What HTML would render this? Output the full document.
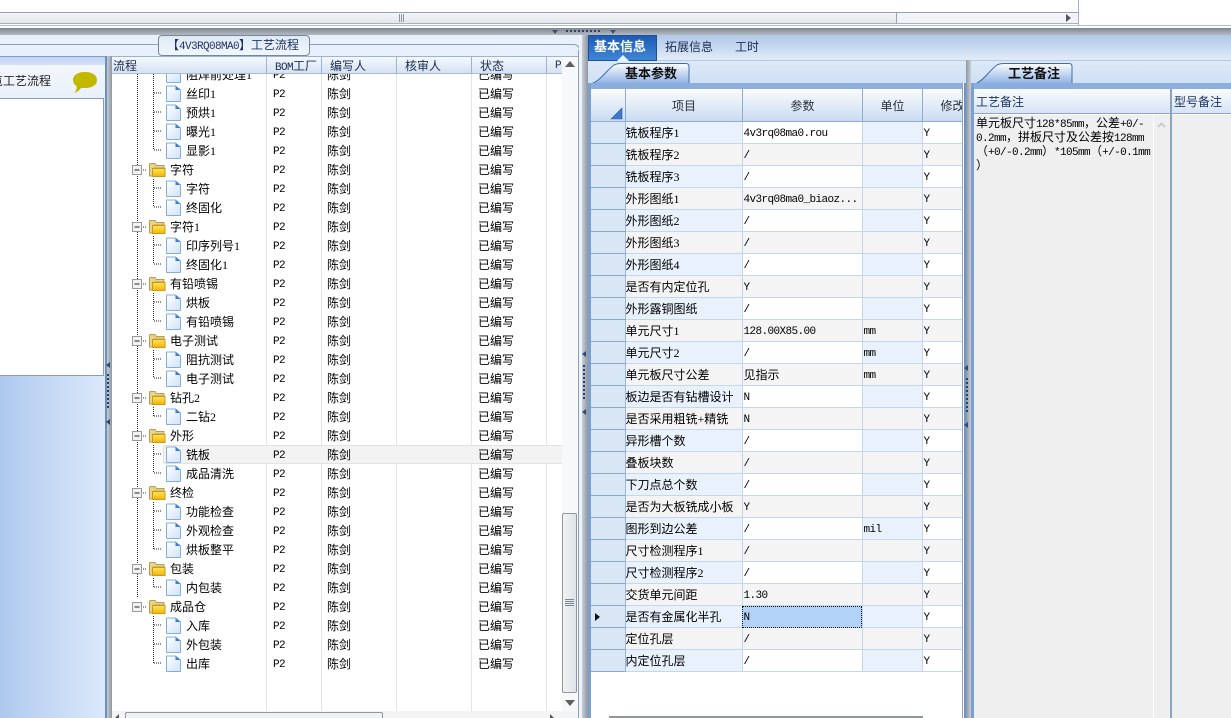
<!DOCTYPE html>
<html lang="zh"><head><meta charset="utf-8"><title>工艺流程</title>
<style>
html,body{margin:0;padding:0;width:1231px;height:718px;overflow:hidden;background:#fff}
body{position:relative;font:12px/14px "Liberation Serif","WenQuanYi Zen Hei","Noto Sans CJK SC",sans-serif;color:#000}
.a{position:absolute}
.m{font:11px/14px "Liberation Mono",monospace;letter-spacing:-.6px}
.r{position:relative;height:19px;margin:0;line-height:19px;white-space:nowrap}
.r svg{position:absolute;left:54px;top:0;width:16px;height:19px}
.r.f svg{left:20px;width:34px}
.r span{position:absolute;top:1px}
.r span:nth-of-type(1){left:74px}
.r.f span:nth-of-type(1){left:58px}
.r span:nth-of-type(2){left:161px;top:2px;font:11px/19px "Liberation Mono",monospace;letter-spacing:-.6px}
.r span:nth-of-type(3){left:215px}
.r span:nth-of-type(4){left:366px}
.h{position:absolute;top:58px;height:16px;line-height:16px;white-space:nowrap;color:#1c2c50}
.v{position:absolute;width:1px;background:#e2e4e8}
.hs{position:absolute;width:1px;background:#9db4d0}
table{border-collapse:collapse;table-layout:fixed;width:391px}
td,th{padding:2px 0 0 1px;border-right:1px solid #c5d7ec;border-bottom:1px solid #c5d7ec;height:19px;line-height:19px;text-align:left;font-weight:normal;white-space:nowrap;overflow:hidden;background:#fff}
td.m{padding-top:4px;height:17px;line-height:17px}
thead th{height:30px;text-align:center;background:linear-gradient(#fbfcfe,#c9dbf1);border-right:1px solid #8fabcd;border-bottom:1px solid #8fabcd;color:#2a2f3a}
tbody th{background:#d8e6f6;border-right:1px solid #9cb6d6;border-bottom:1px solid #8ba8c8;padding:0;height:21px}
tbody td:nth-of-type(1){padding-left:0}
tbody td:nth-of-type(1),tbody td:nth-of-type(3){background:#e8f1fc}
tbody tr:nth-child(even) td{background:#f4f4f4}
.sel{background:#b2d3f7!important;outline:1px dotted #111;outline-offset:-1px}
.tab{font-weight:bold;font-size:13px;white-space:nowrap;color:#111}
</style></head><body>

<svg width="0" height="0" style="position:absolute">
<defs>
<linearGradient id="gd" x1="0" y1="0" x2="1" y2="1"><stop offset="0" stop-color="#fff"/><stop offset="1" stop-color="#cfe2f8"/></linearGradient>
<linearGradient id="gy" x1="0" y1="0" x2="0" y2="1"><stop offset="0" stop-color="#ffe45c"/><stop offset="1" stop-color="#f5b400"/></linearGradient>
<linearGradient id="gt" x1="0" y1="0" x2="0" y2="1"><stop offset="0" stop-color="#fbfdff"/><stop offset="1" stop-color="#8fb2e4"/></linearGradient>
<symbol id="d" viewBox="0 0 16 19"><path d="M.5 2.500Q.5 2 1 2H9.500L14.500 6V17Q14.500 17.500 14 17.500H1Q.5 17.500 .5 17Z" fill="url(#gd)" stroke="#7eaee4"/><path d="M9.500 2V6H14.500Z" fill="#3f7fd2"/></symbol>
<symbol id="f" viewBox="0 0 34 19"><rect x=".5" y="5.500" width="9" height="9" fill="#f2f2f2" stroke="#9a9a9a"/><path d="M2.500 10H7.500" stroke="#222"/><path d="M11 10H15" stroke="#333" stroke-dasharray="1 1"/><path d="M17.500 16V4.500Q17.500 3.500 18.500 3.500H23L24.500 5.500H32V8H22V16Z" fill="#e8d38c" stroke="#b89c50"/><rect x="20.500" y="8.500" width="12.500" height="8" fill="url(#gy)" stroke="#c99a20"/></symbol>
</defs>
</svg>

<!-- top strip -->
<div class="a" style="left:0;top:12px;width:1078px;height:12px;background:#f1f3f6;border-top:1px solid #9aa3ad;border-bottom:1px solid #a8b0ba;box-sizing:border-box"></div>
<div class="a" style="left:0;top:13px;width:896px;height:10px;background:linear-gradient(#f4f5f7,#e4e7eb);border-right:1px solid #9aa3ad"></div>
<div class="a" style="left:399px;top:14px;width:6px;height:8px;background:repeating-linear-gradient(90deg,#8d96a2 0 1px,transparent 1px 2px)"></div>
<div class="a" style="left:1066px;top:14px;width:0;height:0;border-left:5px solid #555;border-top:4px solid transparent;border-bottom:4px solid transparent"></div>
<div class="a" style="left:1078px;top:0;width:1px;height:25px;background:#9fb2c9"></div>
<div class="a" style="left:0;top:25px;width:1231px;height:1px;background:#a8bdd6"></div>
<div class="a" style="left:0;top:28px;width:1231px;height:7px;background:linear-gradient(#7d8691,#b4bac2)"></div>
<div class="a" style="left:552px;top:30px;width:0;height:0;border-top:4px solid #3b4f78;border-left:3px solid transparent;border-right:3px solid transparent"></div>
<div class="a" style="left:610px;top:30px;width:0;height:0;border-top:4px solid #3b4f78;border-left:3px solid transparent;border-right:3px solid transparent"></div>
<div class="a" style="left:566px;top:30px;width:35px;height:2px;background:repeating-linear-gradient(90deg,#2c3f6c 0 2px,transparent 2px 4px)"></div>

<!-- left outer panel -->
<div class="a" style="left:0;top:35px;width:582px;height:683px;background:#e8f1fb"></div>
<div class="a" style="left:0;top:44px;width:580px;height:674px;box-sizing:border-box;border:1px solid #8da0ba;border-left:0;border-bottom:0;border-top-right-radius:6px"></div>
<div class="a" style="left:158px;top:35px;width:152px;height:21px;box-sizing:border-box;border:1px solid #74879f;border-radius:4px;background:linear-gradient(#dfe9f6,#f1f6fc);color:#1f3461;line-height:19px;padding-left:8px;white-space:nowrap;font-size:12px">【<span class="m" style="line-height:19px">4V3RQ08MA0</span>】工艺流程</div>

<!-- far-left pane -->
<div class="a" style="left:0;top:56px;width:105px;height:662px;overflow:hidden;border-top:1px solid #7f9cc4;box-sizing:border-box;background:linear-gradient(90deg,#aec9ee,#dce9fb)">
 <div class="a" style="left:0;top:0;width:105px;height:8px;background:linear-gradient(#c2d6f2,#d2e1f6)"></div>
 <div class="a" style="left:0;top:8px;width:105px;height:34px;background:linear-gradient(#f3f7fd,#e9f0fa)"></div>
 <div class="a" style="left:-9px;top:16px;font-size:12px;line-height:16px;white-space:nowrap;color:#222">览工艺流程</div>
 <svg class="a" style="left:72px;top:14px" width="26" height="24" viewBox="0 0 26 24"><path d="M13 1C20 1 25 4 25 9S20 17 13 17C11 17 10 17 9 17C7 20 5 21 2 22C4 20 5 18 4.500 15C2 13.500 1 11 1 9C1 4 6 1 13 1Z" fill="#c2b800"/></svg>
 <div class="a" style="left:0;top:41px;width:104px;height:278px;box-sizing:border-box;background:#fff;border:1px solid #8c9cb0;border-left:0"></div>
</div>

<!-- left splitter -->
<div class="a" style="left:105px;top:56px;width:2px;height:662px;background:#6d8fbc"></div>
<div class="a" style="left:107px;top:56px;width:5px;height:662px;background:linear-gradient(90deg,#c6ccd4,#8e96a0)"></div>
<div class="a" style="left:106px;top:362px;width:0;height:0;border-right:4px solid #33476f;border-top:3px solid transparent;border-bottom:3px solid transparent"></div>
<div class="a" style="left:106px;top:419px;width:0;height:0;border-right:4px solid #33476f;border-top:3px solid transparent;border-bottom:3px solid transparent"></div>
<div class="a" style="left:107px;top:374px;width:2px;height:35px;background:repeating-linear-gradient(#2c3f6c 0 2px,transparent 2px 4px)"></div>

<!-- tree grid -->
<div class="a" style="left:112px;top:56px;width:466px;height:662px;background:#fff"></div>
<div class="v" style="left:266px;top:74px;height:637px"></div>
<div class="v" style="left:321px;top:74px;height:637px"></div>
<div class="v" style="left:396px;top:74px;height:637px"></div>
<div class="v" style="left:471px;top:74px;height:637px"></div>
<div class="v" style="left:546px;top:74px;height:637px"></div>
<div class="a" style="left:163px;top:445px;width:399px;height:19px;box-sizing:border-box;background:#f3f3f3;border:1px solid #e2e2e2;border-right:0;border-radius:2px 0 0 2px"></div>
<svg class="a" style="left:112px;top:65px" width="60" height="610"><path d="M25.500 9V532M41.500 9V85M41.500 114V142M41.500 171V199M41.500 228V256M41.500 285V313M41.500 342V351M41.500 380V408M41.500 437V484M41.500 513V522M41.500 551V598" stroke="#222" fill="none" stroke-dasharray="1 1"/><path d="M42 28H50M42 47H50M42 66H50M42 85H50M42 123H50M42 142H50M42 180H50M42 199H50M42 237H50M42 256H50M42 294H50M42 313H50M42 351H50M42 389H50M42 408H50M42 446H50M42 465H50M42 484H50M42 522H50M42 560H50M42 579H50M42 598H50" stroke="#222" fill="none" stroke-dasharray="1 1"/></svg>
<div class="a" style="left:112px;top:65px;width:450px;height:646px;overflow:hidden">
<p class="r"><svg><use href="#d"/></svg><span>阻焊前处理1</span><span>P2</span><span>陈剑</span><span>已编写</span></p>
<p class="r"><svg><use href="#d"/></svg><span>丝印1</span><span>P2</span><span>陈剑</span><span>已编写</span></p>
<p class="r"><svg><use href="#d"/></svg><span>预烘1</span><span>P2</span><span>陈剑</span><span>已编写</span></p>
<p class="r"><svg><use href="#d"/></svg><span>曝光1</span><span>P2</span><span>陈剑</span><span>已编写</span></p>
<p class="r"><svg><use href="#d"/></svg><span>显影1</span><span>P2</span><span>陈剑</span><span>已编写</span></p>
<p class="r f"><svg><use href="#f"/></svg><span>字符</span><span>P2</span><span>陈剑</span><span>已编写</span></p>
<p class="r"><svg><use href="#d"/></svg><span>字符</span><span>P2</span><span>陈剑</span><span>已编写</span></p>
<p class="r"><svg><use href="#d"/></svg><span>终固化</span><span>P2</span><span>陈剑</span><span>已编写</span></p>
<p class="r f"><svg><use href="#f"/></svg><span>字符1</span><span>P2</span><span>陈剑</span><span>已编写</span></p>
<p class="r"><svg><use href="#d"/></svg><span>印序列号1</span><span>P2</span><span>陈剑</span><span>已编写</span></p>
<p class="r"><svg><use href="#d"/></svg><span>终固化1</span><span>P2</span><span>陈剑</span><span>已编写</span></p>
<p class="r f"><svg><use href="#f"/></svg><span>有铅喷锡</span><span>P2</span><span>陈剑</span><span>已编写</span></p>
<p class="r"><svg><use href="#d"/></svg><span>烘板</span><span>P2</span><span>陈剑</span><span>已编写</span></p>
<p class="r"><svg><use href="#d"/></svg><span>有铅喷锡</span><span>P2</span><span>陈剑</span><span>已编写</span></p>
<p class="r f"><svg><use href="#f"/></svg><span>电子测试</span><span>P2</span><span>陈剑</span><span>已编写</span></p>
<p class="r"><svg><use href="#d"/></svg><span>阻抗测试</span><span>P2</span><span>陈剑</span><span>已编写</span></p>
<p class="r"><svg><use href="#d"/></svg><span>电子测试</span><span>P2</span><span>陈剑</span><span>已编写</span></p>
<p class="r f"><svg><use href="#f"/></svg><span>钻孔2</span><span>P2</span><span>陈剑</span><span>已编写</span></p>
<p class="r"><svg><use href="#d"/></svg><span>二钻2</span><span>P2</span><span>陈剑</span><span>已编写</span></p>
<p class="r f"><svg><use href="#f"/></svg><span>外形</span><span>P2</span><span>陈剑</span><span>已编写</span></p>
<p class="r"><svg><use href="#d"/></svg><span>铣板</span><span>P2</span><span>陈剑</span><span>已编写</span></p>
<p class="r"><svg><use href="#d"/></svg><span>成品清洗</span><span>P2</span><span>陈剑</span><span>已编写</span></p>
<p class="r f"><svg><use href="#f"/></svg><span>终检</span><span>P2</span><span>陈剑</span><span>已编写</span></p>
<p class="r"><svg><use href="#d"/></svg><span>功能检查</span><span>P2</span><span>陈剑</span><span>已编写</span></p>
<p class="r"><svg><use href="#d"/></svg><span>外观检查</span><span>P2</span><span>陈剑</span><span>已编写</span></p>
<p class="r"><svg><use href="#d"/></svg><span>烘板整平</span><span>P2</span><span>陈剑</span><span>已编写</span></p>
<p class="r f"><svg><use href="#f"/></svg><span>包装</span><span>P2</span><span>陈剑</span><span>已编写</span></p>
<p class="r"><svg><use href="#d"/></svg><span>内包装</span><span>P2</span><span>陈剑</span><span>已编写</span></p>
<p class="r f"><svg><use href="#f"/></svg><span>成品仓</span><span>P2</span><span>陈剑</span><span>已编写</span></p>
<p class="r"><svg><use href="#d"/></svg><span>入库</span><span>P2</span><span>陈剑</span><span>已编写</span></p>
<p class="r"><svg><use href="#d"/></svg><span>外包装</span><span>P2</span><span>陈剑</span><span>已编写</span></p>
<p class="r"><svg><use href="#d"/></svg><span>出库</span><span>P2</span><span>陈剑</span><span>已编写</span></p>
</div>

<!-- tree header -->
<div class="a" style="left:112px;top:56px;width:466px;height:18px;box-sizing:border-box;background:linear-gradient(#f4f8fd,#d5e2f3);border-bottom:1px solid #a9bdd6;border-top:1px solid #9db4d0"></div>
<div class="hs" style="left:266px;top:57px;height:17px"></div>
<div class="hs" style="left:321px;top:57px;height:17px"></div>
<div class="hs" style="left:396px;top:57px;height:17px"></div>
<div class="hs" style="left:471px;top:57px;height:17px"></div>
<div class="hs" style="left:546px;top:57px;height:17px"></div>
<div class="h" style="left:113px">流程</div>
<div class="h" style="left:275px"><span class="m">BOM</span>工厂</div>
<div class="h" style="left:330px">编写人</div>
<div class="h" style="left:405px">核审人</div>
<div class="h" style="left:480px">状态</div>
<div class="h m" style="left:555px;line-height:16px">P</div>

<!-- tree scrollbars -->
<div class="a" style="left:562px;top:57px;width:16px;height:654px;background:#f7f8f9"></div>
<div class="a" style="left:565px;top:61px;width:0;height:0;border-bottom:6px solid #5c6065;border-left:5px solid transparent;border-right:5px solid transparent"></div>
<div class="a" style="left:562px;top:513px;width:15px;height:180px;box-sizing:border-box;background:linear-gradient(90deg,#f0f2f5,#dfe3e8);border:1px solid #8f979f;border-radius:2px"></div>
<div class="a" style="left:565px;top:599px;width:9px;height:7px;background:repeating-linear-gradient(#7d8794 0 1px,transparent 1px 2px)"></div>
<div class="a" style="left:565px;top:700px;width:0;height:0;border-top:6px solid #5c6065;border-left:5px solid transparent;border-right:5px solid transparent"></div>
<div class="a" style="left:112px;top:711px;width:466px;height:7px;background:#f3f4f6"></div>
<div class="a" style="left:125px;top:712px;width:258px;height:8px;box-sizing:border-box;background:#eef1f5;border:1px solid #8f979f;border-radius:2px"></div>
<div class="a" style="left:550px;top:714px;width:0;height:0;border-left:4px solid #555;border-top:4px solid transparent;border-bottom:4px solid transparent"></div>
<div class="a" style="left:115px;top:714px;width:0;height:0;border-right:4px solid #555;border-top:4px solid transparent;border-bottom:4px solid transparent"></div>

<!-- middle splitter -->
<div class="a" style="left:578px;top:50px;width:1px;height:668px;background:#8da0ba"></div>
<div class="a" style="left:579px;top:35px;width:3px;height:683px;background:#eef3fa"></div>
<div class="a" style="left:582px;top:35px;width:6px;height:683px;background:linear-gradient(90deg,#c8ced6,#8d96a1)"></div>
<div class="a" style="left:582px;top:351px;width:0;height:0;border-right:4px solid #33476f;border-top:3px solid transparent;border-bottom:3px solid transparent"></div>
<div class="a" style="left:582px;top:409px;width:0;height:0;border-right:4px solid #33476f;border-top:3px solid transparent;border-bottom:3px solid transparent"></div>
<div class="a" style="left:583px;top:365px;width:2px;height:35px;background:repeating-linear-gradient(#2c3f6c 0 2px,transparent 2px 4px)"></div>

<!-- right top tabs -->
<div class="a" style="left:588px;top:35px;width:643px;height:25px;background:linear-gradient(#afc7e8,#e1ecf8);border-bottom:1px solid #b6c9df"></div>
<div class="a" style="left:588px;top:35px;width:69px;height:26px;box-sizing:border-box;background:linear-gradient(#1d5cb5,#3f86d6);border:1px solid #1a4f9c"></div>
<div class="a tab" style="left:594px;top:39px;color:#fff;line-height:16px">基本信息</div>
<div class="a" style="left:617px;top:55px;width:0;height:0;border-bottom:6px solid #eaf2fb;border-left:6px solid transparent;border-right:6px solid transparent"></div>
<div class="a" style="left:665px;top:39px;line-height:16px;color:#1c2c50">拓展信息</div>
<div class="a" style="left:735px;top:39px;line-height:16px;color:#1c2c50">工时</div>

<!-- left param panel -->
<div class="a" style="left:588px;top:61px;width:378px;height:22px;background:linear-gradient(#dde9f8,#d0e0f5)"></div>
<svg class="a" style="left:588px;top:61px" width="110" height="24"><path d="M4 22.500C12 20 20 8 26 4Q29 2.500 32 2.500H98Q101 2.500 101 5.500V22.500Z" fill="url(#gt)" stroke="#3f6ea8"/></svg>
<div class="a tab" style="left:625px;top:66px;line-height:15px">基本参数</div>
<div class="a" style="left:588px;top:83px;width:376px;height:6px;background:#8aaedd"></div>
<div class="a" style="left:588px;top:83px;width:3px;height:635px;background:#7d9fce"></div>
<div class="a" style="left:591px;top:89px;width:372px;height:629px;background:#fff;overflow:hidden">
<table>
<colgroup><col style="width:34px"><col style="width:117px"><col style="width:120px"><col style="width:60px"><col style="width:60px"></colgroup>
<thead><tr><th></th><th>项目</th><th>参数</th><th>单位</th><th>修改</th></tr></thead>
<tbody>
<tr><th></th><td>铣板程序1</td><td class="m">4v3rq08ma0.rou</td><td></td><td class="m">Y</td></tr>
<tr><th></th><td>铣板程序2</td><td class="m">/</td><td></td><td class="m">Y</td></tr>
<tr><th></th><td>铣板程序3</td><td class="m">/</td><td></td><td class="m">Y</td></tr>
<tr><th></th><td>外形图纸1</td><td class="m">4v3rq08ma0_biaoz...</td><td></td><td class="m">Y</td></tr>
<tr><th></th><td>外形图纸2</td><td class="m">/</td><td></td><td class="m">Y</td></tr>
<tr><th></th><td>外形图纸3</td><td class="m">/</td><td></td><td class="m">Y</td></tr>
<tr><th></th><td>外形图纸4</td><td class="m">/</td><td></td><td class="m">Y</td></tr>
<tr><th></th><td>是否有内定位孔</td><td class="m">Y</td><td></td><td class="m">Y</td></tr>
<tr><th></th><td>外形露铜图纸</td><td class="m">/</td><td></td><td class="m">Y</td></tr>
<tr><th></th><td>单元尺寸1</td><td class="m">128.00X85.00</td><td class="m">mm</td><td class="m">Y</td></tr>
<tr><th></th><td>单元尺寸2</td><td class="m">/</td><td class="m">mm</td><td class="m">Y</td></tr>
<tr><th></th><td>单元板尺寸公差</td><td>见指示</td><td class="m">mm</td><td class="m">Y</td></tr>
<tr><th></th><td>板边是否有钻槽设计</td><td class="m">N</td><td></td><td class="m">Y</td></tr>
<tr><th></th><td>是否采用粗铣+精铣</td><td class="m">N</td><td></td><td class="m">Y</td></tr>
<tr><th></th><td>异形槽个数</td><td class="m">/</td><td></td><td class="m">Y</td></tr>
<tr><th></th><td>叠板块数</td><td class="m">/</td><td></td><td class="m">Y</td></tr>
<tr><th></th><td>下刀点总个数</td><td class="m">/</td><td></td><td class="m">Y</td></tr>
<tr><th></th><td>是否为大板铣成小板</td><td class="m">Y</td><td></td><td class="m">Y</td></tr>
<tr><th></th><td>图形到边公差</td><td class="m">/</td><td class="m">mil</td><td class="m">Y</td></tr>
<tr><th></th><td>尺寸检测程序1</td><td class="m">/</td><td></td><td class="m">Y</td></tr>
<tr><th></th><td>尺寸检测程序2</td><td class="m">/</td><td></td><td class="m">Y</td></tr>
<tr><th></th><td>交货单元间距</td><td class="m">1.30</td><td></td><td class="m">Y</td></tr>
<tr><th></th><td>是否有金属化半孔</td><td class="m sel">N</td><td></td><td class="m">Y</td></tr>
<tr><th></th><td>定位孔层</td><td class="m">/</td><td></td><td class="m">Y</td></tr>
<tr><th></th><td>内定位孔层</td><td class="m">/</td><td></td><td class="m">Y</td></tr>
</tbody></table>
</div>
<svg class="a" style="left:610px;top:107px" width="13" height="13"><path d="M12 1V12H1Z" fill="#3f78c8" stroke="#2f5ea8" stroke-width=".6"/></svg>
<div class="a" style="left:595px;top:613px;width:0;height:0;border-left:5px solid #111;border-top:4px solid transparent;border-bottom:4px solid transparent"></div>
<div class="a" style="left:609px;top:716px;width:314px;height:2px;background:#8f979f"></div>

<!-- right splitter -->
<div class="a" style="left:962px;top:83px;width:1px;height:635px;background:#8aa4c8"></div>
<div class="a" style="left:963px;top:83px;width:1px;height:635px;background:#fff"></div>
<div class="a" style="left:964px;top:83px;width:2px;height:635px;background:#6f93c4"></div>
<div class="a" style="left:966px;top:60px;width:5px;height:658px;background:linear-gradient(90deg,#8d96a1,#c8ced6)"></div>
<div class="a" style="left:964px;top:365px;width:0;height:0;border-right:4px solid #33476f;border-top:3px solid transparent;border-bottom:3px solid transparent"></div>
<div class="a" style="left:964px;top:422px;width:0;height:0;border-right:4px solid #33476f;border-top:3px solid transparent;border-bottom:3px solid transparent"></div>
<div class="a" style="left:966px;top:378px;width:2px;height:35px;background:repeating-linear-gradient(#2c3f6c 0 2px,transparent 2px 4px)"></div>

<!-- right panel -->
<div class="a" style="left:971px;top:61px;width:260px;height:22px;background:linear-gradient(#dde9f8,#d0e0f5)"></div>
<svg class="a" style="left:971px;top:61px" width="110" height="24"><path d="M5 22.500C12 20 20 8 26 4Q29 2.500 32 2.500H98Q101 2.500 101 5.500V22.500Z" fill="url(#gt)" stroke="#3f6ea8"/></svg>
<div class="a tab" style="left:1008px;top:66px;line-height:15px">工艺备注</div>
<div class="a" style="left:971px;top:83px;width:260px;height:6px;background:#8aaedd"></div>
<div class="a" style="left:971px;top:83px;width:3px;height:635px;background:#7d9fce"></div>
<div class="a" style="left:974px;top:89px;width:257px;height:25px;box-sizing:border-box;background:linear-gradient(#fafcfe,#d6e4f5);border-bottom:1px solid #8fa6c2"></div>
<div class="a" style="left:976px;top:95px;color:#1f3461">工艺备注</div>
<div class="a" style="left:1174px;top:95px;color:#1f3461">型号备注</div>
<div class="a" style="left:974px;top:115px;width:257px;height:603px;background:#efefef"></div>
<div class="a" style="left:1153px;top:115px;width:1px;height:603px;background:#fff"></div>
<div class="a" style="left:1170px;top:89px;width:2px;height:629px;background:#8ba3bf"></div>
<div class="a" style="left:976px;top:117px;width:176px;font-size:12px;line-height:12px;white-space:nowrap">单元板尺寸<span class="m" style="line-height:12px">128*85mm</span>，公差<span class="m" style="line-height:12px">+0/-</span><br><span class="m" style="line-height:12px">0.2mm</span>，拼板尺寸及公差按<span class="m" style="line-height:12px">128mm</span><br>（<span class="m" style="line-height:12px">+0/-0.2mm</span>）<span class="m" style="line-height:12px">*105mm</span>（<span class="m" style="line-height:12px">+/-0.1mm</span><br>）</div>
<svg class="a" style="left:1157px;top:122px" width="9" height="6"><path d="M1 5L4.500 1.500L8 5" fill="none" stroke="#c4c4c4" stroke-width="1.600"/></svg>

</body></html>
